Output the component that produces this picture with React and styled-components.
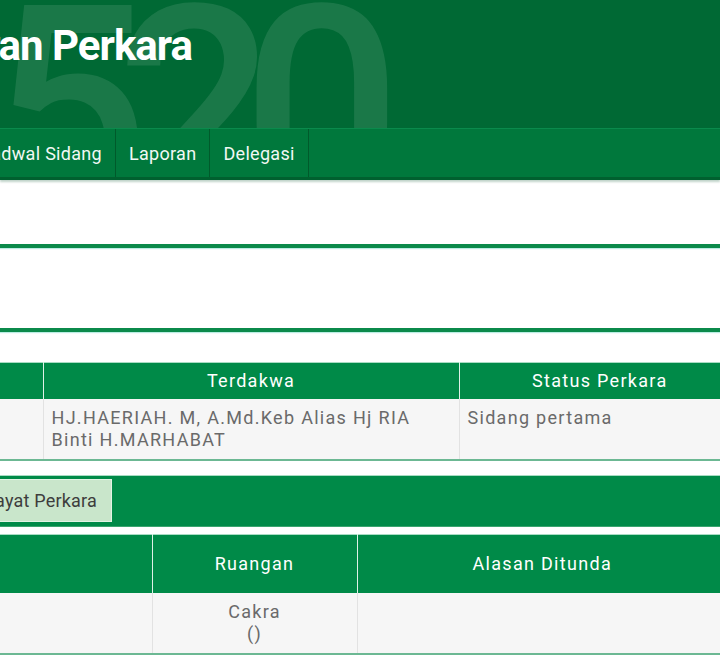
import React from "react";
import styled, { createGlobalStyle } from "styled-components";

const GlobalStyle = createGlobalStyle`
  html, body {
    margin: 0;
    padding: 0;
    background: #ffffff;
    overflow: hidden;
  }
  body {
    font-family: Roboto, "Liberation Sans", sans-serif;
    -webkit-font-smoothing: antialiased;
  }
  * {
    box-sizing: border-box;
  }
`;

const Header = styled.header`
  position: relative;
  height: 128px;
  background: #006934;
  overflow: hidden;
`;

const Watermark = styled.div`
  position: absolute;
  left: -10px;
  top: -32px;
  font-family: Roboto, sans-serif;
  font-weight: 500;
  font-size: 280px;
  line-height: 1;
  letter-spacing: -33px;
  color: rgba(255, 255, 255, 0.1);
  user-select: none;
`;

const TitleBox = styled.div`
  position: relative;
  display: flex;
  justify-content: flex-end;
  width: 192px;
  padding-top: 22px;
`;

const Title = styled.h1`
  margin: 0;
  white-space: nowrap;
  font-family: Roboto, sans-serif;
  font-weight: 700;
  font-size: 42px;
  line-height: 48px;
  letter-spacing: -1px;
  color: #ffffff;
`;

const Nav = styled.nav`
  display: flex;
  height: 52px;
  background: #00783c;
  border-top: 1px solid #0a8a4c;
  border-bottom: 3px solid #00602f;
  box-shadow: 0 2px 2px rgba(0, 80, 40, 0.25);
`;

const NavLead = styled.div`
  display: flex;
  justify-content: flex-end;
  width: 116px;
`;

const NavItem = styled.a`
  display: flex;
  align-items: center;
  padding: 0 13px;
  white-space: nowrap;
  font-size: 18px;
  letter-spacing: 0.3px;
  color: #f2f8f4;
  border-right: 1px solid #005a2b;
  text-decoration: none;
`;

const Panel = styled.section`
  height: ${({ $h }) => $h}px;
  border-bottom: 4px solid #0b8a4b;
  box-shadow: 0 1px 1px rgba(120, 220, 200, 0.5);
`;

const Spacer = styled.div`
  height: ${({ $h }) => $h}px;
`;

const Table = styled.table`
  width: ${({ $w }) => $w}px;
  border-collapse: collapse;
  table-layout: fixed;
  border-top: 1px solid #a8dcc3;
  border-bottom: 2px solid #6cb893;
  font-size: 18px;
  letter-spacing: 1.3px;
`;

const Th = styled.th`
  height: ${({ $h }) => $h || 36}px;
  padding: 0 8px;
  background: #008a48;
  color: #ffffff;
  font-weight: 400;
  text-align: center;
  border-left: 1px solid #dff1e7;
  &:first-child {
    border-left: none;
  }
`;

const Td = styled.td`
  padding: 8px;
  vertical-align: top;
  background: #f6f6f6;
  color: #6a6a6a;
  line-height: 22px;
  text-align: ${({ $center }) => ($center ? "center" : "left")};
  border-left: 1px solid #e2e2e2;
  height: 59px;
  &:first-child {
    border-left: none;
  }
`;

const TabBar = styled.div`
  display: flex;
  align-items: center;
  height: 52px;
  margin: 14px 0 7px;
  background: #008a48;
  border-top: 1px solid #a8dcc3;
  border-bottom: 1px solid #3aa56f;
`;

const TabLead = styled.div`
  display: flex;
  justify-content: flex-end;
  width: 112px;
`;

const TabButton = styled.button`
  height: 43px;
  padding: 0 14px 0 18px;
  white-space: nowrap;
  font-family: Roboto, sans-serif;
  font-size: 18px;
  letter-spacing: 0.2px;
  color: #3d3d3d;
  background: #c9e6cb;
  border: 1px solid #e3f3e4;
  border-radius: 0;
`;

export default function App() {
  return (
    <>
      <GlobalStyle />
      <Header>
        <Watermark>520</Watermark>
        <TitleBox>
          <Title>Penelusuran Perkara</Title>
        </TitleBox>
      </Header>
      <Nav>
        <NavLead>
          <NavItem>Jadwal Sidang</NavItem>
        </NavLead>
        <NavItem>Laporan</NavItem>
        <NavItem>Delegasi</NavItem>
      </Nav>
      <Panel $h={68} />
      <Panel $h={84} />
      <Spacer $h={30} />
      <Table $w={740}>
        <colgroup>
          <col style={{ width: 43 }} />
          <col style={{ width: 416 }} />
          <col />
        </colgroup>
        <thead>
          <tr>
            <Th />
            <Th>Terdakwa</Th>
            <Th>Status Perkara</Th>
          </tr>
        </thead>
        <tbody>
          <tr>
            <Td />
            <Td>HJ.HAERIAH. M, A.Md.Keb Alias Hj RIA Binti H.MARHABAT</Td>
            <Td>Sidang pertama</Td>
          </tr>
        </tbody>
      </Table>
      <TabBar>
        <TabLead>
          <TabButton>Riwayat Perkara</TabButton>
        </TabLead>
      </TabBar>
      <Table $w={727}>
        <colgroup>
          <col style={{ width: 152 }} />
          <col style={{ width: 205 }} />
          <col />
        </colgroup>
        <thead>
          <tr>
            <Th $h={59} />
            <Th $h={59}>Ruangan</Th>
            <Th $h={59}>Alasan Ditunda</Th>
          </tr>
        </thead>
        <tbody>
          <tr>
            <Td />
            <Td $center>
              Cakra
              <br />
              ()
            </Td>
            <Td />
          </tr>
        </tbody>
      </Table>
    </>
  );
}
